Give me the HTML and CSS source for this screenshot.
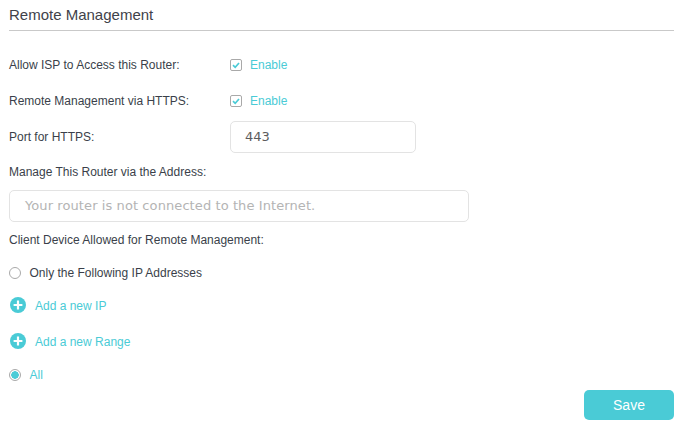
FILE: index.html
```html
<!DOCTYPE html>
<html lang="en">
<head>
<meta charset="utf-8">
<title>Remote Management</title>
<link rel="stylesheet" href="styles.css">
</head>
<body>
<main class="page">
  <h1 class="title">Remote Management</h1>
  <div class="row row-first">
    <span class="label">Allow ISP to Access this Router:</span>
    <span class="check"><svg viewBox="0 0 12 12" width="12" height="12"><rect x=".5" y=".5" width="11" height="11" rx="1.5" fill="#fff" stroke="#a9a9a9"/><path d="M3 6.2 5.2 8.3 9 4" fill="none" stroke="#4acbd6" stroke-width="1.7"/></svg></span>
    <span class="accent">Enable</span>
  </div>
  <div class="row row-second">
    <span class="label">Remote Management via HTTPS:</span>
    <span class="check"><svg viewBox="0 0 12 12" width="12" height="12"><rect x=".5" y=".5" width="11" height="11" rx="1.5" fill="#fff" stroke="#a9a9a9"/><path d="M3 6.2 5.2 8.3 9 4" fill="none" stroke="#4acbd6" stroke-width="1.7"/></svg></span>
    <span class="accent">Enable</span>
  </div>
  <div class="row row-port">
    <span class="label">Port for HTTPS:</span>
    <div class="field field-port">443</div>
  </div>
  <div class="label stack-label">Manage This Router via the Address:</div>
  <div class="field field-address">Your router is not connected to the Internet.</div>
  <div class="label client-label">Client Device Allowed for Remote Management:</div>
  <div class="radio-row radio-first">
    <span class="radio"></span>
    <span class="label">Only the Following IP Addresses</span>
  </div>
  <div class="add-row add-first">
    <svg class="plus" viewBox="0 0 16 16" width="16" height="16"><circle cx="8" cy="8" r="8" fill="#4acbd6"/><path d="M8 3.6v8.8M3.6 8h8.8" stroke="#fff" stroke-width="2.2"/></svg>
    <span class="accent add-text">Add a new IP</span>
  </div>
  <div class="add-row add-second">
    <svg class="plus" viewBox="0 0 16 16" width="16" height="16"><circle cx="8" cy="8" r="8" fill="#4acbd6"/><path d="M8 3.6v8.8M3.6 8h8.8" stroke="#fff" stroke-width="2.2"/></svg>
    <span class="accent add-text">Add a new Range</span>
  </div>
  <div class="radio-row radio-all">
    <span class="radio radio-on"></span>
    <span class="accent">All</span>
  </div>
  <div class="actions"><button class="save" type="button">Save</button></div>
</main>
</body>
</html>
```
FILE: styles.css
```css
html, body { margin: 0; padding: 0; background: #fff; }
body { font-family: "Liberation Sans", Arial, sans-serif; font-size: 12px; color: #3a3f4a; width: 685px; height: 435px; overflow: hidden; }
.page { padding: 0 11px 0 9px; }
.title { margin: 0; height: 30px; border-bottom: 1px solid #c9c9c9; font-size: 15px; font-weight: 400; line-height: 30px; color: #3f424a; }
.row { display: flex; align-items: center; }
.row-first { margin-top: 24px; height: 20px; }
.row-second { margin-top: 16px; height: 20px; }
.row-port { margin-top: 10px; height: 32px; }
.label { line-height: 16px; }
.row .label { width: 221px; flex: none; }
.check { width: 12px; height: 12px; flex: none; display: block; margin-right: 8px; }
.check svg { display: block; }
.accent { color: #4acbd6; }
.field { box-sizing: border-box; border: 1px solid #e3e3e3; border-radius: 5px; font-family: "DejaVu Sans", sans-serif; font-size: 13px; }
.field-port { width: 186px; height: 32px; line-height: 30px; padding-left: 14px; color: #5c5c5c; }
.stack-label { margin-top: 11px; }
.field-address { width: 460px; height: 32px; line-height: 30px; padding-left: 15px; margin-top: 10px; color: #b4b4b4; letter-spacing: .09px; }
.client-label { margin-top: 10px; }
.radio-row { display: flex; align-items: center; height: 16px; }
.radio-first { margin-top: 17px; }
.radio-all { margin-top: 18px; }
.radio { box-sizing: border-box; width: 12px; height: 12px; border: 1px solid #a9a9a9; border-radius: 50%; margin-right: 8.5px; flex: none; background: #fff; }
.radio-on { background: radial-gradient(circle, #4acbd6 0 3.5px, #fff 4px); }
.add-row { display: flex; align-items: center; height: 16px; }
.add-first { margin-top: 16px; }
.add-second { margin-top: 20px; }
.add-text { padding-top: 2px; }
.plus { margin: 0 9px 0 1px; flex: none; }
.actions { display: flex; justify-content: flex-end; margin-top: 7px; }
.save { width: 90px; height: 30px; border: 0; border-radius: 5px; background: #4acbd6; color: #fff; font-family: "Liberation Sans", Arial, sans-serif; font-size: 14px; padding: 0; }
```
